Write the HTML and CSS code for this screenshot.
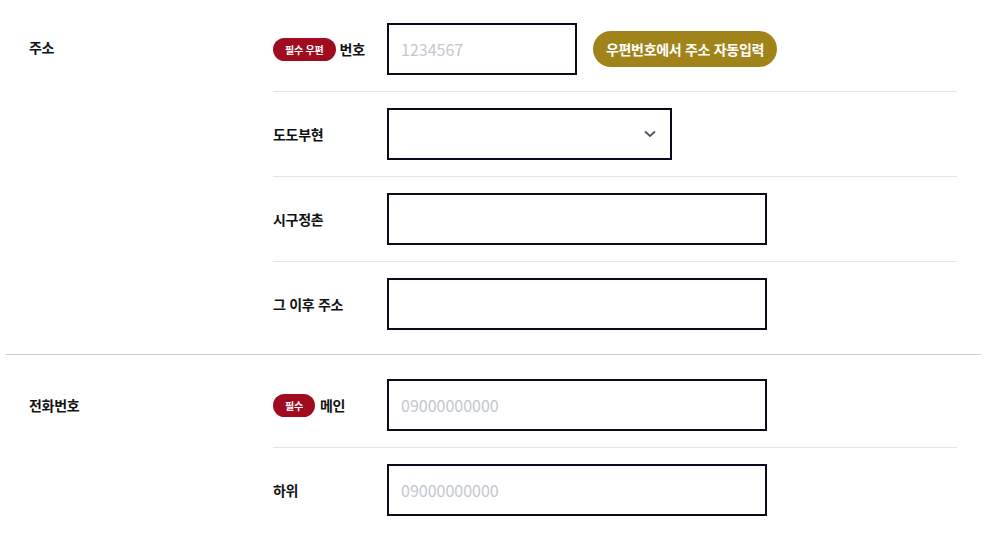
FILE: index.html
```html
<!DOCTYPE html>
<html lang="ko">
<head>
<meta charset="utf-8">
<title>주소 입력</title>
<link rel="stylesheet" href="styles.css">
</head>
<body>
<div class="form">
  <section class="section first">
    <div class="section-label">주소</div>
    <div class="rows">
      <div class="row">
        <div class="row-label"><span class="badge">필수 우편</span><span>번호</span></div>
        <input class="field short" type="text" placeholder="1234567">
        <button class="auto-btn" type="button">우편번호에서 주소 자동입력</button>
      </div>
      <div class="row">
        <div class="row-label">도도부현</div>
        <div class="select">
          <svg class="chevron" width="12" height="8" viewBox="0 0 12 8"><path d="M1 1.5 L6 6 L11 1.5" fill="none" stroke="#4b5563" stroke-width="1.8"/></svg>
        </div>
      </div>
      <div class="row">
        <div class="row-label">시구정촌</div>
        <input class="field long" type="text">
      </div>
      <div class="row">
        <div class="row-label">그 이후 주소</div>
        <input class="field long" type="text">
      </div>
    </div>
  </section>
  <section class="section">
    <div class="section-label">전화번호</div>
    <div class="rows">
      <div class="row">
        <div class="row-label"><span class="badge">필수</span><span class="gap">메인</span></div>
        <input class="field long" type="text" placeholder="09000000000">
      </div>
      <div class="row">
        <div class="row-label">하위</div>
        <input class="field long" type="text" placeholder="09000000000">
      </div>
    </div>
  </section>
</div>
</body>
</html>
```

FILE: styles.css
```css
* { box-sizing: border-box; }
html, body { margin: 0; padding: 0; background: #fff; }
body {
  font-family: "Noto Sans CJK KR", "Noto Sans", sans-serif;
  color: #111;
  overflow: hidden;
}
.form { padding: 0 6px 0 5px; }
.section {
  display: flex;
  padding: 8px 24px 8px 24px;
  border-bottom: 1px solid #cfcfd4;
}
.section.first { padding-top: 7px; }
.section-label {
  width: 244px;
  flex: none;
  margin-top: 16px;
  height: 52px;
  line-height: 52px;
  font-size: 14px;
  font-weight: 700;
  letter-spacing: -0.3px;
}
.section.first .section-label { line-height: 48px; }
.rows { flex: 1; }
.row {
  display: flex;
  align-items: center;
  padding: 16px 0;
  border-bottom: 1px solid #e5e5e5;
}
.row:last-child { border-bottom: none; }
.row-label {
  width: 114px;
  flex: none;
  display: flex;
  align-items: center;
  font-size: 14px;
  font-weight: 700;
  letter-spacing: -0.3px;
}
.badge {
  display: inline-flex;
  align-items: center;
  justify-content: center;
  height: 23px;
  padding: 0 12px;
  border-radius: 12px;
  background: #a10b1f;
  color: #fff;
  font-size: 10px;
  font-weight: 700;
  margin-right: 4px;
  letter-spacing: -0.2px;
}
.gap { margin-left: 1px; }
.field {
  height: 52px;
  border: 2px solid #0b0b1c;
  border-radius: 0;
  padding: 0 12px;
  font-family: "Noto Sans CJK KR", "Noto Sans", sans-serif;
  font-size: 16px;
  color: #111;
  outline: none;
}
.field::placeholder { color: #c3c7cf; }
.field.short { width: 190px; }
.field.long { width: 380px; }
.select {
  width: 285px;
  height: 52px;
  border: 2px solid #0b0b1c;
  display: flex;
  align-items: center;
  justify-content: flex-end;
  padding-right: 14px;
}
.auto-btn {
  margin-left: 16px;
  height: 36px;
  width: 184px;
  border: none;
  border-radius: 18px;
  background: #a0841a;
  color: #fff;
  font-family: "Noto Sans CJK KR", "Noto Sans", sans-serif;
  font-size: 14px;
  font-weight: 700;
  letter-spacing: -0.3px;
  padding: 0;
}
```
